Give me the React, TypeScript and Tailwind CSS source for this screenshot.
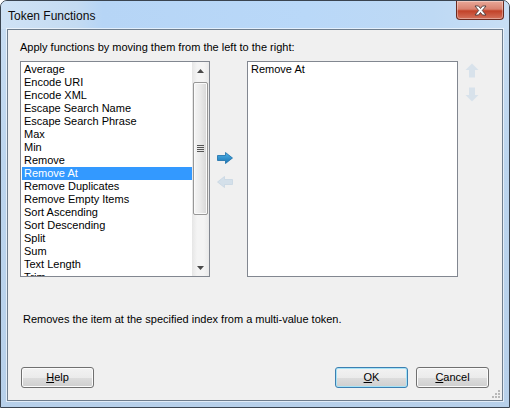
import React from 'react'

const items = [
  'Average',
  'Encode URI',
  'Encode XML',
  'Escape Search Name',
  'Escape Search Phrase',
  'Max',
  'Min',
  'Remove',
  'Remove At',
  'Remove Duplicates',
  'Remove Empty Items',
  'Sort Ascending',
  'Sort Descending',
  'Split',
  'Sum',
  'Text Length',
  'Trim',
]

function ScrollTri({ down }: { down?: boolean }) {
  return (
    <svg width="7" height="4" viewBox="0 0 7 4">
      {down ? <path d="M0 0 H7 L3.5 4 Z" fill="#4a4a4a" /> : <path d="M0 4 H7 L3.5 0 Z" fill="#4a4a4a" />}
    </svg>
  )
}

function Button({ label, mnemonic, def }: { label: string; mnemonic: string; def?: boolean }) {
  const rest = label.slice(1)
  return (
    <button
      className={`w-[73px] h-[21px] rounded-[3px] border text-[11px] leading-[13px] text-black flex items-center justify-center bg-[linear-gradient(#f2f2f2_0%,#ebebeb_50%,#dddddd_50%,#cfcfcf_100%)] ${
        def
          ? 'border-[#3c7fb1] shadow-[inset_0_0_0_1px_#a6e3f7]'
          : 'border-[#707070] shadow-[inset_0_0_0_1px_#fbfbfb]'
      }`}
    >
      <span>
        <u className="underline-offset-[1px]">{mnemonic}</u>
        {rest}
      </span>
    </button>
  )
}

export default function App() {
  return (
    <div className="w-[510px] h-[408px] relative flex flex-col border border-[#3a4450] rounded-t-[7px] overflow-hidden bg-[linear-gradient(#c9def3,#bcd5ee_40%,#b7d0ea)] font-['Liberation_Sans',Arial,sans-serif] text-black">
      {/* title bar */}
      <div className="h-[28px] flex items-center pl-[7px] bg-[linear-gradient(90deg,#cfe2f5_0%,#c4dbf2_15%,#b6d5f6_20%,#b9d8f8_60%,#bed9f4_85%,#c8def4_100%)]">
        <span className="text-[12px] leading-[14px] text-[#0c0c0c] mt-[2px]">Token Functions</span>
      </div>
      <div className="absolute right-[5px] top-0 w-[48px] h-[19px] rounded-b-[4px] border border-t-0 border-[#6b2a1f] bg-[linear-gradient(#e9a898_0%,#d98270_45%,#c24228_55%,#d4725c_100%)] shadow-[inset_0_0_0_1px_rgba(255,255,255,0.35)] flex items-center justify-center">
        <svg width="13" height="11" viewBox="0 0 13 11">
          <path
            d="M1 1 H4.5 L6.5 3.5 L8.5 1 H12 L8.3 5.5 L12 10 H8.5 L6.5 7.5 L4.5 10 H1 L4.7 5.5 Z"
            fill="#ffffff"
            stroke="#4a3a3a"
            strokeWidth="0.9"
            strokeLinejoin="round"
          />
        </svg>
      </div>

      {/* frame + client */}
      <div className="flex-1 flex px-[6px] pb-[6px]">
        <div className="flex-1 relative flex flex-col border border-[#6f7e8e] bg-[#f0f0f0] shadow-[0_0_0_1px_rgba(255,255,255,0.6)]">
          <div className="mt-[11px] ml-[12px] text-[11px] leading-[13px]">
            Apply functions by moving them from the left to the right:
          </div>

          <div className="mt-[7px] ml-[12px] flex h-[216px]">
            {/* left list */}
            <div className="w-[190px] h-full border border-[#828790] bg-white flex overflow-hidden">
              <div className="flex-1 pt-[1px] pl-[1px] overflow-hidden">
                {items.map((it) => (
                  <div
                    key={it}
                    className={`h-[13px] leading-[13px] text-[11px] pl-[2px] whitespace-nowrap ${
                      it === 'Remove At' ? 'bg-[#3399ff] text-white' : ''
                    }`}
                  >
                    {it}
                  </div>
                ))}
              </div>
              {/* scrollbar */}
              <div className="w-[17px] h-full flex flex-col bg-[linear-gradient(90deg,#e6e6e6,#f4f4f4_30%,#f4f4f4_70%,#e9e9e9)]">
                <div className="h-[17px] flex items-center justify-center">
                  <ScrollTri />
                </div>
                <div className="mt-[3px] h-[133px] mx-[1px] rounded-[2px] border border-[#979797] bg-[linear-gradient(90deg,#f5f5f5,#e9e9e9_50%,#d7d7d7)] shadow-[inset_0_0_0_1px_#fafafa] flex items-center justify-center">
                  <div className="flex flex-col gap-[1px]">
                    <div className="w-[7px] h-[1px] bg-[#555]" />
                    <div className="w-[7px] h-[1px] bg-[#555]" />
                    <div className="w-[7px] h-[1px] bg-[#555]" />
                    <div className="w-[7px] h-[1px] bg-[#555]" />
                  </div>
                </div>
                <div className="flex-1" />
                <div className="h-[17px] flex items-center justify-center">
                  <ScrollTri down />
                </div>
              </div>
            </div>

            {/* move arrows */}
            <div className="w-[37px] flex flex-col pl-[7px] pt-[91px] gap-[12px]">
              <svg width="16" height="12" viewBox="0 0 16 12">
                <defs>
                  <linearGradient id="ra" x1="0" y1="0" x2="0" y2="1">
                    <stop offset="0" stopColor="#4fb3e8" />
                    <stop offset="1" stopColor="#1a74b4" />
                  </linearGradient>
                </defs>
                <path d="M0.5 3.5 H8.5 V0.5 L15.5 6 L8.5 11.5 V8.5 H0.5 Z" fill="url(#ra)" stroke="#1c6ea8" strokeWidth="0.8" />
              </svg>
              <svg width="16" height="12" viewBox="0 0 16 12">
                <path d="M15.5 3.5 H7.5 V0.5 L0.5 6 L7.5 11.5 V8.5 H15.5 Z" fill="#d4e0ea" stroke="#c8d6e2" strokeWidth="0.8" />
              </svg>
            </div>

            {/* right list */}
            <div className="w-[211px] h-full border border-[#828790] bg-white pt-[1px] pl-[3px]">
              <div className="h-[13px] leading-[13px] text-[11px]">Remove At</div>
            </div>

            {/* up / down */}
            <div className="ml-[7px] flex flex-col pt-[2px] gap-[9px]">
              <svg width="14" height="15" viewBox="0 0 14 15">
                <path d="M7 0.5 L13.5 7 H10 V14.5 H4 V7 H0.5 Z" fill="#d8e2eb" />
              </svg>
              <svg width="14" height="15" viewBox="0 0 14 15">
                <path d="M7 14.5 L13.5 8 H10 V0.5 H4 V8 H0.5 Z" fill="#d8e2eb" />
              </svg>
            </div>
          </div>

          <div className="mt-[36px] ml-[15px] text-[11px] leading-[13px]">
            Removes the item at the specified index from a multi-value token.
          </div>

          <div className="mt-auto mb-[12px] flex px-[13px]">
            <Button label="Help" mnemonic="H" />
            <div className="flex-1" />
            <div className="flex gap-[8px]">
              <Button label="OK" mnemonic="O" def />
              <Button label="Cancel" mnemonic="C" />
            </div>
          </div>

          {/* size grip */}
          <svg className="absolute right-[1px] bottom-[1px]" width="10" height="10" viewBox="0 0 10 10">
            {[
              [7, 1],
              [4, 4],
              [7, 4],
              [1, 7],
              [4, 7],
              [7, 7],
            ].map(([x, y]) => (
              <rect key={`${x}-${y}`} x={x} y={y} width="2" height="2" fill="#b8b8b8" />
            ))}
          </svg>
        </div>
      </div>
    </div>
  )
}
